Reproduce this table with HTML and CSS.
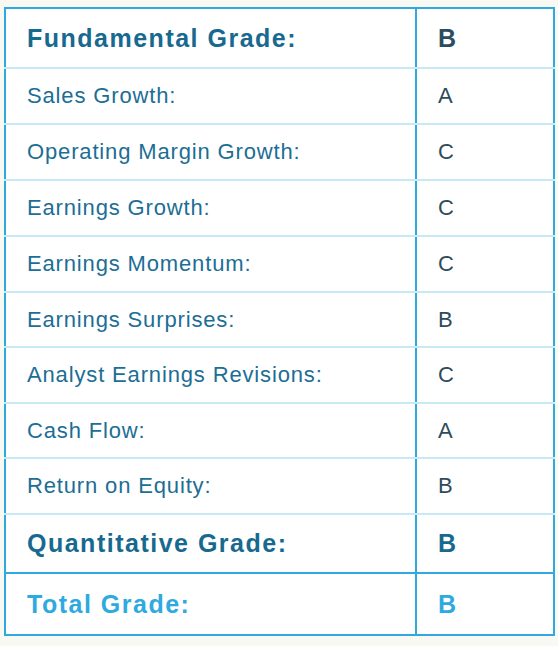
FILE: index.html
```html
<!DOCTYPE html>
<html>
<head>
<meta charset="utf-8">
<link rel="stylesheet" href="styles.css">
</head>
<body>
<table class="grades">
  <tr class="row head"><td class="label">Fundamental Grade:</td><td class="grade">B</td></tr>
  <tr class="row item"><td class="label">Sales Growth:</td><td class="grade">A</td></tr>
  <tr class="row item"><td class="label">Operating Margin Growth:</td><td class="grade">C</td></tr>
  <tr class="row item"><td class="label">Earnings Growth:</td><td class="grade">C</td></tr>
  <tr class="row item"><td class="label">Earnings Momentum:</td><td class="grade">C</td></tr>
  <tr class="row item short"><td class="label">Earnings Surprises:</td><td class="grade">B</td></tr>
  <tr class="row item"><td class="label">Analyst Earnings Revisions:</td><td class="grade">C</td></tr>
  <tr class="row item short"><td class="label">Cash Flow:</td><td class="grade">A</td></tr>
  <tr class="row item"><td class="label">Return on Equity:</td><td class="grade">B</td></tr>
  <tr class="row quant"><td class="label">Quantitative Grade:</td><td class="grade">B</td></tr>
  <tr class="row total"><td class="label">Total Grade:</td><td class="grade">B</td></tr>
</table>
</body>
</html>
```

FILE: styles.css
```css
html, body {
  background: #f9f9f3;
}
body {
  margin: 7px 0 0 4px;
  font-family: "Liberation Sans", Arial, Helvetica, sans-serif;
}
.grades {
  border-collapse: collapse;
  width: 551px;
  background: #ffffff;
  border: 2px solid #2eaadf;
}
.grades td {
  padding: 0 0 0 21px;
  border-bottom: 2px solid #c8e9f6;
  vertical-align: middle;
}
.grades .label {
  width: 388px;
  border-right: 2px solid #2eaadf;
}
.grades .grade {
  width: 115px;
}
.item td {
  height: 54px;
  font-size: 22px;
  color: #1c6e94;
  letter-spacing: 0.85px;
}
.item .grade {
  color: #2e4b5c;
  letter-spacing: 0;
}
.item.short td {
  height: 53px;
}
.head td {
  height: 58px;
  font-size: 25px;
  font-weight: bold;
  color: #17698f;
  letter-spacing: 1.5px;
}
.head .grade {
  color: #2c4d61;
  letter-spacing: 0;
}
.quant td {
  height: 57px;
  font-size: 25px;
  font-weight: bold;
  color: #17698f;
  letter-spacing: 1.5px;
  border-bottom: 2px solid #2eaadf;
}
.total td {
  height: 60px;
  font-size: 25px;
  font-weight: bold;
  color: #2eaadf;
  letter-spacing: 1.5px;
  border-bottom: 2px solid #2eaadf;
}
.quant .grade, .total .grade {
  letter-spacing: 0;
}
```
